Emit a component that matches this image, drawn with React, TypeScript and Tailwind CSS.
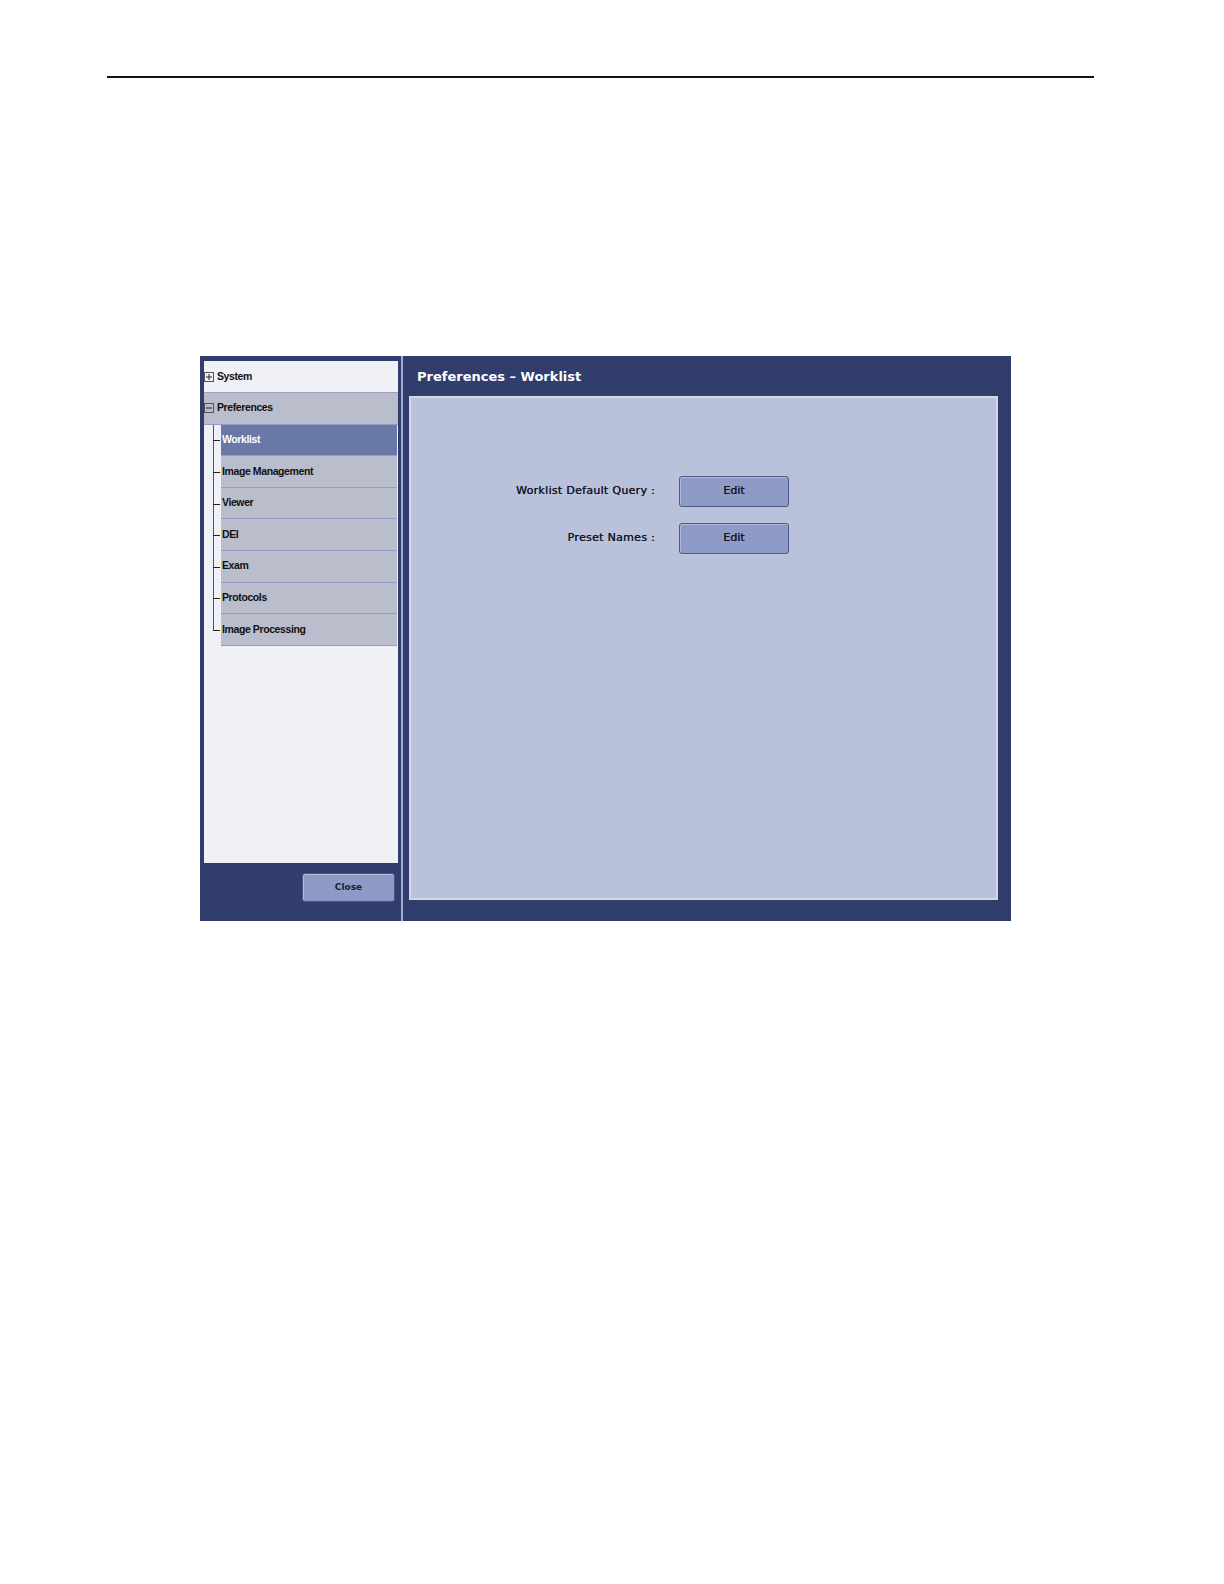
import React from "react";

const treeFont = { fontFamily: '"Liberation Sans", Arial, sans-serif' };
const uiFont = { fontFamily: '"DejaVu Sans", Verdana, sans-serif' };

function ExpandBox({ open }: { open: boolean }) {
  return (
    <svg width="10" height="10" viewBox="0 0 10 10" className="shrink-0">
      <rect x="0.5" y="0.5" width="9" height="9" fill="none" stroke="#555" strokeWidth="1" />
      <line x1="2" y1="5" x2="8" y2="5" stroke="#222" strokeWidth="1" />
      {!open && <line x1="5" y1="2" x2="5" y2="8" stroke="#222" strokeWidth="1" />}
    </svg>
  );
}

const children = [
  "Worklist",
  "Image Management",
  "Viewer",
  "DEI",
  "Exam",
  "Protocols",
  "Image Processing",
];

function ChildRow({ label, selected, last }: { label: string; selected: boolean; last: boolean }) {
  return (
    <div className="flex h-[31.6px]">
      <div className="relative w-[17px] shrink-0">
        <div
          className={`absolute left-[9px] top-0 w-px bg-[#555] ${last ? "h-1/2" : "h-full"}`}
        />
        <div className="absolute left-[9px] top-1/2 h-px w-[7px] bg-[#222]" />
      </div>
      <div
        className={`flex flex-1 items-center border-b border-[#959dc2] pl-px ${
          selected ? "bg-[#6a78a8] text-white" : "bg-[#b9bdcc] text-[#111]"
        }`}
      >
        <span className="text-[10.5px] font-bold tracking-[-0.4px]" style={treeFont}>
          {label}
        </span>
      </div>
    </div>
  );
}

function EditButton() {
  return (
    <button
      className="ml-[22px] flex h-[31px] w-[110px] items-center justify-center rounded-[3px] border border-[#4f5a88] bg-[#8d9bc6] shadow-[inset_1px_1px_0_#b0b9da] text-[11px] text-[#15182a] [text-shadow:0.25px_0_0_#15182a]"
      style={uiFont}
    >
      Edit
    </button>
  );
}

export default function App() {
  return (
    <div className="w-full min-h-screen bg-white overflow-hidden">
      <div className="ml-[107px] mt-[76px] h-[2px] w-[987px] bg-[#111]" />
      <div className="ml-[200px] mt-[278px] flex h-[565px] w-[811px] bg-[#313d6c]">
        {/* left column */}
        <div className="flex w-[201px] shrink-0 flex-col pl-[4px] pt-[5px]">
          <div className="flex h-[502px] w-[194px] flex-col bg-[#eff1f7]">
            <div className="flex h-[32px] items-center gap-[3px] border-b border-[#9aa2c3] bg-[#eff1f7]">
              <ExpandBox open={false} />
              <span className="text-[10.5px] font-bold tracking-[-0.4px] text-[#111]" style={treeFont}>
                System
              </span>
            </div>
            <div className="flex h-[31.6px] items-center gap-[3px] border-b border-[#959dc2] bg-[#b9bdcc]">
              <ExpandBox open={true} />
              <span className="text-[10.5px] font-bold tracking-[-0.4px] text-[#111]" style={treeFont}>
                Preferences
              </span>
            </div>
            <div className="flex flex-col pr-px">
              {children.map((c, i) => (
                <ChildRow key={c} label={c} selected={i === 0} last={i === children.length - 1} />
              ))}
            </div>
          </div>
          <div className="ml-[98px] mt-[10px]">
            <button
              className="flex h-[29px] w-[93px] items-center justify-center rounded-[3px] border border-[#4b5684] bg-[#8e9bc6] shadow-[inset_1px_1px_0_#b4bddd] text-[9px] font-bold text-[#1a1f33]"
              style={uiFont}
            >
              Close
            </button>
          </div>
        </div>
        {/* divider */}
        <div className="w-[2px] shrink-0 bg-[#a3acd4]" />
        {/* right panel */}
        <div className="flex flex-1 flex-col">
          <div className="flex h-[40px] items-center pl-[14px] pt-[2px]">
            <span className="text-[13px] font-bold text-white" style={uiFont}>
              Preferences – Worklist
            </span>
          </div>
          <div className="ml-[6px] flex h-[504px] w-[589px] flex-col border-2 border-[#d3d7e6] bg-[#b9c1db] pt-[78px]">
            <div className="flex items-center">
              <div
                className="w-[246px] pr-[2px] text-right text-[11px] tracking-[0.3px] text-[#15182a] [text-shadow:0.25px_0_0_#15182a]"
                style={uiFont}
              >
                Worklist Default Query :
              </div>
              <EditButton />
            </div>
            <div className="mt-[16px] flex items-center">
              <div
                className="w-[246px] pr-[2px] text-right text-[11px] tracking-[0.3px] text-[#15182a] [text-shadow:0.25px_0_0_#15182a]"
                style={uiFont}
              >
                Preset Names :
              </div>
              <EditButton />
            </div>
          </div>
        </div>
      </div>
    </div>
  );
}
